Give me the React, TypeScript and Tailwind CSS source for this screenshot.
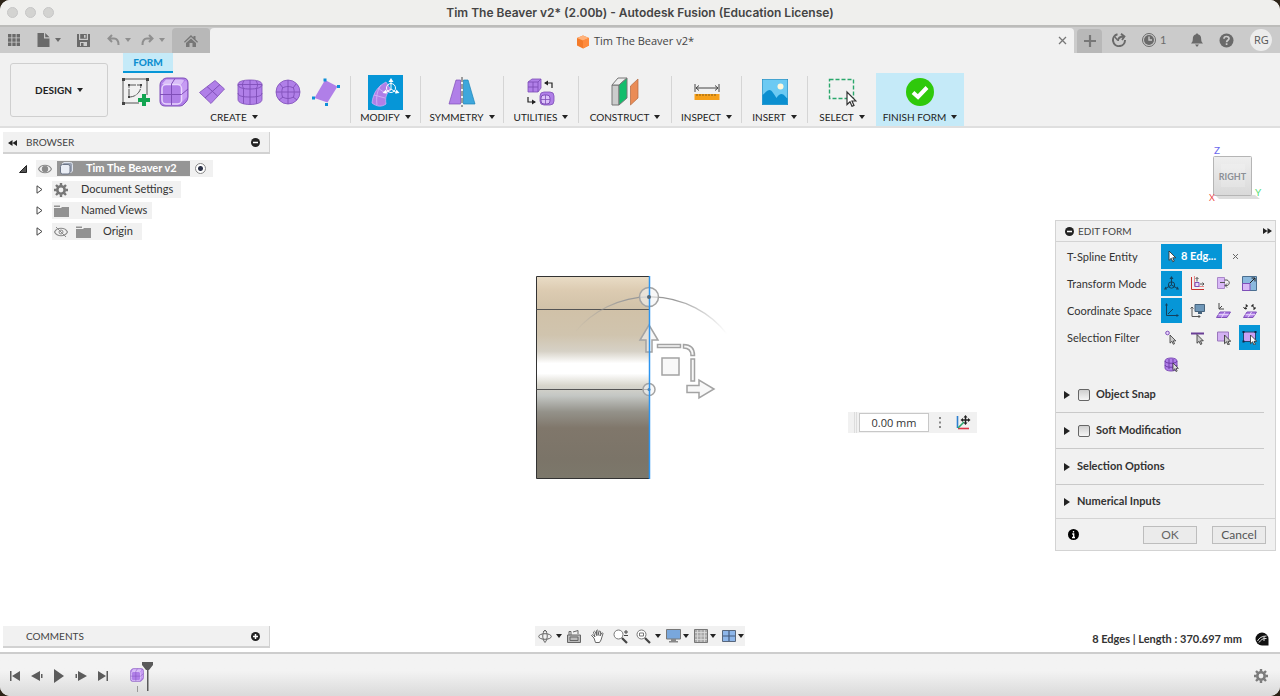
import React, { useState } from 'react';

const P = '#b07fe8';
const D = '#7f4fb8';

const Caret = ({ className = '' }: { className?: string }) => (
  <svg width="6" height="4" viewBox="0 0 6 4" className={className} aria-hidden>
    <path d="M0 0h6L3 4z" fill="currentColor" />
  </svg>
);

const Svg = ({ w, h = w, vb, children }: any) => (
  <svg width={w} height={h} viewBox={vb || `0 0 ${w} ${h}`} fill="none" className="shrink-0" aria-hidden>
    {children}
  </svg>
);

const Cursor = ({ x, y, s = 1, fill = '#fff' }: any) => (
  <path
    transform={`translate(${x} ${y}) scale(${s})`}
    d="M0 0v12.500l3-2.800 2 4.600 2-.9-2-4.400h4z"
    fill={fill}
    stroke="#333"
    strokeWidth="1.200"
  />
);

/* ---------- title bar and tabs ---------- */

const TitleBar = () => (
  <header className="relative flex h-[27px] items-center justify-center border-b-2 border-[#bcbcba] bg-[#efefed]">
    <div className="absolute left-[7px] top-[7px] flex gap-[7px]">
      <span className="size-[11px] rounded-full border border-[#c6c6c6] bg-[#d3d3d1]" />
      <span className="size-[11px] rounded-full border border-[#c6c6c6] bg-[#d3d3d1]" />
      <span className="size-[11px] rounded-full border border-[#c6c6c6] bg-[#d3d3d1]" />
    </div>
    <h1 className="font-[Inter,sans-serif] text-[12px] font-semibold text-[#444]">
      Tim The Beaver v2* (2.00b) - Autodesk Fusion (Education License)
    </h1>
  </header>
);

const TabStrip = () => (
  <nav className="flex h-[26px] items-end bg-[#cbcbcb] text-[#6a6a6a]">
    <div className="flex h-full w-[172px] shrink-0 items-center">
      <button aria-label="Data panel" className="ml-2 mr-[17px]">
        <Svg w={12}>
          <path d="M0 0h3.400v3.400H0zM4.300 0h3.400v3.400H4.300zM8.600 0H12v3.400H8.600zM0 4.300h3.400v3.400H0zM4.300 4.300h3.400v3.400H4.300zM8.600 4.300H12v3.400H8.600zM0 8.600h3.400V12H0zM4.300 8.600h3.400V12H4.300zM8.600 8.600H12V12H8.600z" fill="currentColor" />
        </Svg>
      </button>
      <button aria-label="File" className="flex items-center gap-[5px]">
        <Svg w={13} h={14}>
          <path d="M.500 0H7v5.500h5.500V14H.500zM8.200 0l4.300 4.300H8.200z" fill="currentColor" />
        </Svg>
        <Caret />
      </button>
      <button aria-label="Save" className="ml-4">
        <Svg w={13}>
          <path d="M0 0h2v6h9V0h2v13H0zM3.200 0h6.600v4.800H3.200zM7 1v2.800h1.600V1z" fill="currentColor" fillRule="evenodd" />
          <path d="M3 8h7v4H3z" fill="#cbcbcb" />
          <path d="M4 9h2.500v3H4z" fill="currentColor" />
        </Svg>
      </button>
      <button aria-label="Undo" className="ml-[17px] flex items-center gap-[5px] text-[#8f8f8f]">
        <Svg w={13} h={12}>
          <path d="M5 1L1.500 4.500 5 8M2 4.500h5c3 0 4.500 2.500 4.500 6.500" stroke="currentColor" strokeWidth="2" />
        </Svg>
        <Caret />
      </button>
      <button aria-label="Redo" className="ml-[10px] flex items-center gap-[5px] text-[#8f8f8f]">
        <Svg w={13} h={12}>
          <path d="M8 1l3.500 3.500L8 8M11 4.500H6C3 4.500 1.500 7 1.500 11" stroke="currentColor" strokeWidth="2" />
        </Svg>
        <Caret />
      </button>
    </div>
    <button aria-label="Home" className="flex h-[25px] w-[38px] shrink-0 items-center justify-center rounded-t bg-[#b8b8b8] text-[#777]">
      <Svg w={14} h={12}>
        <path d="M7 0l2.500 2.400V1h2v3.300L14 6.800l-.8.900L7 2 .8 7.700 0 6.800zM7 3.400l5 4.500V12H8.500V8h-3v4H2V7.900z" fill="currentColor" />
      </Svg>
    </button>
    <div className="flex h-[25px] flex-1 items-center rounded-t bg-[#f1f1f1]">
      <div className="flex flex-1 items-center justify-center gap-1 pl-[2px] pt-[2px] font-['Open_Sans',sans-serif] text-[11px] text-[#444]">
        <Svg w={14}>
          <path d="M7 .5l6 2.500v7.500L7 13.500 1 10.500V3z" fill="#f47b2a" />
          <path d="M7 .5l6 2.500-6 2.600L1 3z" fill="#ffb27a" />
          <path d="M7 5.600L13 3v7.500l-6 3z" fill="#ff8b3d" />
        </Svg>
        <span>Tim The Beaver v2*</span>
      </div>
      <button aria-label="Close tab" className="mr-[7px]">
        <Svg w={9}>
          <path d="M1 1l7 7M8 1L1 8" stroke="#777" strokeWidth="1.300" />
        </Svg>
      </button>
    </div>
    <div className="flex h-full w-[206px] shrink-0 items-center">
      <button aria-label="New tab" className="ml-[3px] mt-[2px] flex h-[24px] w-[25px] items-center justify-center rounded-t bg-[#b8b8b8]">
        <Svg w={12}>
          <path d="M6 0v12M0 6h12" stroke="#777" strokeWidth="2.200" />
        </Svg>
      </button>
      <button aria-label="Extensions" className="ml-[10px]">
        <Svg w={14}>
          <path d="M5.500 1.300A6 6 0 1 0 13 7" stroke="currentColor" strokeWidth="2" />
          <path d="M6 8c0-3 2-4.500 6-4.500M9 .700l3.500 2.800L10 7" stroke="currentColor" strokeWidth="1.800" />
          <path d="M2.500 3.500l3 3.500" stroke="currentColor" strokeWidth="1.500" />
        </Svg>
      </button>
      <button aria-label="Job status" className="ml-4 flex items-center gap-1 text-[11px]">
        <Svg w={14}>
          <circle cx="7" cy="7" r="6.500" stroke="currentColor" />
          <circle cx="7" cy="7" r="5" fill="currentColor" />
          <path d="M7 3.500V7h3" stroke="#cbcbcb" strokeWidth="1.400" />
        </Svg>
        1
      </button>
      <button aria-label="Notifications" className="ml-[25px]">
        <Svg w={12} h={14}>
          <path d="M6 0l1 1.300c2.500.6 3.200 2.500 3.200 5 0 2 .6 3 1.800 4.200H0C1.200 9.300 1.800 8.300 1.800 6.300c0-2.500.7-4.400 3.200-5zM4 11.500h4L6 14z" fill="currentColor" />
        </Svg>
      </button>
      <button aria-label="Help" className="ml-4">
        <Svg w={15}>
          <circle cx="7.500" cy="7.500" r="7" fill="currentColor" />
          <path d="M5 5.800c0-3 5-3 5-.2 0 1.700-2.400 1.700-2.400 3.600M7.600 10.300v1.800" stroke="#cbcbcb" strokeWidth="1.700" />
        </Svg>
      </button>
      <button className="ml-4 flex size-[22px] items-center justify-center rounded-full bg-[#ececec] font-['Open_Sans',sans-serif] text-[11px] text-[#555]">RG</button>
    </div>
  </nav>
);

/* ---------- ribbon icons ---------- */

const SketchIcon = () => (
  <Svg w={30}>
    <path d="M2 2h24v16M2 2v24h16" stroke="#555" />
    <path d="M8 8h12c0 7-5 12-12 12z" stroke="#555" strokeDasharray="7 1" />
    <path d="M1 1h3v3H1zM25 1h3v3h-3zM1 25h3v3H1zM7 7h2v2H7zM19 7h2v2h-2zM7 19h2v2H7z" fill="#444" />
    <path d="M21 17h4v4h4v4h-4v4h-4v-4h-4v-4h4z" fill="#12a551" />
  </Svg>
);

const BoxIcon = ({ w = 30 }: { w?: number }) => (
  <Svg w={w} vb="0 0 30 30">
    <path d="M8 1h16q5 0 5 5v14q0 3-2 5l-2 2q-1.500 2-4 2H6q-5 0-5-5V8q0-2.500 1.500-4L4 2.500Q5.500 1 8 1z" fill={P} stroke={D} />
    <path d="M3 7l4-4.500h15q4 0 2.500 2L22 8H7z" fill="#d9bdf8" />
    <path d="M22 8l4.500-4.500Q28 4 28 6v14l-5 5z" fill="#c79cf4" />
    <rect x="3" y="7.500" width="19.500" height="19.500" rx="4" fill={P} stroke="#e8d6fc" strokeWidth="1.500" />
    <path d="M16 1.500L12.500 7v21M1 17.500h21.500L29 12" stroke={D} />
  </Svg>
);

const PlaneIcon = () => (
  <Svg w={26} h={24}>
    <path d="M16 .500L25.500 9 12 23.500.500 12.500z" fill={P} stroke={D} strokeWidth=".8" />
    <path d="M8 6.500L18.500 16M21 4.500L6 18" stroke={D} />
  </Svg>
);

const CylinderIcon = () => (
  <Svg w={26}>
    <path d="M1 5.500C1 2 7 1 13 1s12 1 12 4.500v15c0 3.500-6 5-12 5s-12-1.500-12-5z" fill={P} stroke={D} strokeWidth=".8" />
    <path d="M1 5.500C1 9 7 10 13 10s12-1 12-4.500M1 14c0 3.500 6 4 12 4s12-.5 12-4M13 1v24.500M7 1.800c-2 3-2 5-.5 7.500v15.500M19 1.800c2 3 2 5 .5 7.500v15.500M1 5.500h24" stroke={D} strokeWidth=".9" />
  </Svg>
);

const SphereIcon = () => (
  <Svg w={26}>
    <circle cx="13" cy="13" r="12" fill={P} stroke={D} strokeWidth=".8" />
    <path d="M13 1v6M13 19v6M1 13h5M20 13h5M5 5l3 4M21 5l-3 4M4 21l4-3M22 21l-4-3M7.500 9C11 7 15 7 18.500 9c1 3 1 6 0 9-3.500 2-7.500 2-11 0-1-3-1-6 0-9zM13 7v12M6.500 13h13" stroke={D} strokeWidth=".9" />
  </Svg>
);

const FaceIcon = () => (
  <Svg w={28} h={28}>
    <path d="M13 2l12.500 6.500-10 16L2.500 20z" fill={P} />
    <path d="M11.500.500h3v3h-3zM25 7h3v3h-3zM0 18.500h3v3H0zM13 25h3v3h-3z" fill="#0d8fd8" />
  </Svg>
);

const ModifyIcon = () => (
  <Svg w={35}>
    <path d="M35 0H0v35h35z" fill="#0696d7" />
    <path d="M4 28C5 18 10 11 18 7l5 8c-5 3-6 8-5 14-4 3-9 3-14-1z" fill={P} stroke="#d6b6f8" strokeWidth=".7" />
    <path d="M10 13l7 5M6 20l11 3M13 10c-4 6-5 12-4 20" stroke="#d6b6f8" strokeWidth=".8" />
    <path d="M23 14V6M23 14l-6 4M23 14l6 4" stroke="#fff" />
    <circle cx="23" cy="13" r="4.500" stroke="#fff" />
    <path d="M23 3l2.500 4h-5zM14.500 18l3.500-3.500 1 4zM31.500 18l-4.500.500 1.500-4z" fill="#fff" />
  </Svg>
);

const SymmetryIcon = () => (
  <Svg w={28} h={30}>
    <path d="M8 3h4.500v24H1z" fill={P} stroke={D} strokeWidth=".7" />
    <path d="M15.500 3H20l7 24H15.500z" fill="#3ea7dc" stroke="#1d84b8" strokeWidth=".7" />
    <path d="M14 0v30" stroke="#444" strokeDasharray="5 2" />
  </Svg>
);

const UtilitiesIcon = () => (
  <Svg w={28}>
    <path d="M1 4l4-3h9v9l-3 4H1z" fill={P} stroke={D} strokeWidth=".8" />
    <path d="M1 4h10v10M11 4l3-3M6 4v10M1 9h10" stroke={D} strokeWidth=".9" />
    <rect x="13" y="14" width="14" height="13" rx="4" fill={P} stroke={D} strokeWidth=".8" />
    <rect x="14" y="17" width="9" height="9" rx="3" fill="#dcc2fa" stroke={D} />
    <path d="M18.500 17v9M14 21.500h9" stroke={D} strokeWidth=".8" />
    <path d="M18 5h7v5M1 19v5h7" stroke="#222" strokeWidth="1.200" />
    <path d="M17 5l4-2.500v5zM9 24l-4-2.500v5z" fill="#222" />
  </Svg>
);

const ConstructIcon = () => (
  <Svg w={28} h={30}>
    <path d="M1 8h7v20H1z" fill="#ccc" stroke="#777" />
    <path d="M1 8l6-7h9L8 8z" fill="#eee" stroke="#777" />
    <path d="M8 8l8-7v20l-8 7z" fill="#13bd6c" stroke="#777" />
    <path d="M19.500 9L27 2v19l-7.500 7z" fill="#ea8c56" stroke="#b2693f" strokeWidth=".7" />
  </Svg>
);

const InspectIcon = () => (
  <Svg w={26} h={18}>
    <path d="M1 1v8M25 1v8M2 5h22M5 2.500L2 5l3 2.500M21 2.500L24 5l-3 2.500" stroke="#444" />
    <path d="M.500 11h25v6H.500z" fill="#f6a01a" />
    <path d="M3 11v2M6 11v2M9 11v2M12 11v2M15 11v2M18 11v2M21 11v2" stroke="#8a5d10" />
  </Svg>
);

const InsertIcon = () => (
  <Svg w={26}>
    <path d="M0 0h26v26H0z" fill="#6ccaf3" stroke="#1e7eb0" />
    <path d="M.500 16C3 14 5 11 7.500 11s5 5 7 8c2-3 3-4 5-4 2.500 0 4 3 6 4.500v6H.500z" fill="#0b8fd0" />
    <circle cx="18.500" cy="7.500" r="3" fill="#fff8dc" />
  </Svg>
);

const SelectIcon = () => (
  <Svg w={30}>
    <path d="M2.500 2.500h24v19h-24z" stroke="#2aa86c" strokeWidth="1.400" strokeDasharray="4 2" />
    <Cursor x={20} y={15} />
  </Svg>
);

const FinishIcon = () => (
  <Svg w={28}>
    <circle cx="14" cy="14" r="14" fill="#2fc90b" />
    <path d="M7 14.500l5 4.500 9-9.500" stroke="#fff" strokeWidth="4" />
  </Svg>
);

const ToolGroup = ({ label, icon, className = '' }: any) => (
  <div className={`flex shrink-0 ${className}`}>
    <button className="flex flex-1 flex-col items-center pt-[3px]">
      <span className="flex h-[32px] shrink-0 items-center">{icon}</span>
      <span className="flex h-[18px] items-center gap-[5px] whitespace-nowrap text-[10px] text-[#222]">
        {label}
        <Caret />
      </span>
    </button>
    <span className="mt-[3px] h-[47px] w-px bg-[#d5d5d5]" />
  </div>
);

const Ribbon = () => (
  <section className="flex border-b-2 border-[#dfdfdf] bg-[#f1f1f1]">
    <div className="pl-[10px] pt-[10px]">
      <button className="flex h-[54px] w-[98px] items-center justify-center gap-[5px] rounded-[3px] border border-[#cfcfcf] text-[10px] font-bold text-[#222]">
        DESIGN
        <Caret />
      </button>
    </div>
    <div className="flex-1 pl-[10px]">
      <button className="ml-[5px] block h-[20px] w-[50px] border-b-2 border-[#0696d7] bg-[#c5eaf8] text-[10px] font-black text-[#0d8fd0]">
        FORM
      </button>
      <div className="flex h-[53px]">
        <div className="flex w-[233px] shrink-0">
          <div className="flex flex-1 flex-col items-center pt-[3px]">
            <div className="flex h-[32px] shrink-0 items-center gap-[11px] self-start pl-[3px]">
              <button aria-label="Create sketch"><SketchIcon /></button>
              <button aria-label="Box" className="-ml-[3px]"><BoxIcon /></button>
              <button aria-label="Plane" className="-ml-px"><PlaneIcon /></button>
              <button aria-label="Cylinder" className="ml-px"><CylinderIcon /></button>
              <button aria-label="Sphere" className="ml-px"><SphereIcon /></button>
              <button aria-label="Face"><FaceIcon /></button>
            </div>
            <button className="flex h-[18px] items-center gap-[5px] text-[10px] text-[#222]">
              CREATE
              <Caret />
            </button>
          </div>
          <span className="mt-[3px] h-[47px] w-px bg-[#d5d5d5]" />
        </div>
        <ToolGroup className="w-[70px]" label="MODIFY" icon={<ModifyIcon />} />
        <ToolGroup className="w-[83px]" label="SYMMETRY" icon={<SymmetryIcon />} />
        <ToolGroup className="w-[75px]" label="UTILITIES" icon={<UtilitiesIcon />} />
        <ToolGroup className="w-[93px]" label="CONSTRUCT" icon={<ConstructIcon />} />
        <ToolGroup className="w-[70px]" label="INSPECT" icon={<InspectIcon />} />
        <ToolGroup className="w-[66px]" label="INSERT" icon={<InsertIcon />} />
        <button className="flex w-[68px] shrink-0 flex-col items-center pt-[3px]">
          <span className="flex h-[32px] shrink-0 items-center"><SelectIcon /></span>
          <span className="flex h-[18px] items-center gap-[5px] text-[10px] text-[#222]">
            SELECT
            <Caret />
          </span>
        </button>
        <button className="flex w-[88px] shrink-0 flex-col items-center bg-[#c5eaf8] pt-[3px]">
          <span className="flex h-[32px] shrink-0 items-center"><FinishIcon /></span>
          <span className="flex h-[18px] items-center gap-[5px] whitespace-nowrap text-[10px] text-[#222]">
            FINISH FORM
            <Caret />
          </span>
        </button>
      </div>
    </div>
  </section>
);

/* ---------- browser tree ---------- */

const ToggleDot = ({ plus = false }: { plus?: boolean }) => (
  <Svg w={9}>
    <circle cx="4.500" cy="4.500" r="4.500" fill="#222" />
    <path d={plus ? 'M2 4.500h5M4.500 2v5' : 'M2 4.500h5'} stroke="#fff" strokeWidth="1.500" />
  </Svg>
);

const Gear = ({ color = '#777' }: { color?: string }) => (
  <Svg w={14}>
    <circle cx="7" cy="7" r="3.700" stroke={color} strokeWidth="2.600" />
    <path d="M7 0v2.500M7 11.500V14M0 7h2.500M11.500 7H14M2 2l1.800 1.800M10.200 10.200L12 12M12 2l-1.800 1.800M3.800 10.200L2 12" stroke={color} strokeWidth="2.400" />
  </Svg>
);

const Folder = () => (
  <Svg w={15} h={12}>
    <path d="M0 3h7l1-1h7v10H0zM0 .500h6v1.500H0z" fill="#929292" />
  </Svg>
);

const Eye = ({ off = false }: { off?: boolean }) => (
  <Svg w={14} h={12}>
    <path d="M.500 6C3 1 11 1 13.500 6 11 11 3 11 .500 6z" stroke="#8a8a8a" strokeWidth="1.200" />
    <circle cx="7" cy="6" r={off ? 2 : 2.800} fill={off ? 'none' : '#8a8a8a'} stroke="#8a8a8a" />
    {off && <path d="M2 1l10 10" stroke="#8a8a8a" />}
  </Svg>
);

const TreeItem = ({ label, className, children }: any) => (
  <li className="flex h-[21px] items-center pl-[33px]">
    <button aria-label={`Expand ${label}`} className="w-4">
      <Svg w={7} h={9}>
        <path d="M1 .800L6 4.500 1 8.200z" stroke="#444" />
      </Svg>
    </button>
    <span className={`flex h-[17px] items-center bg-[#f1f1f1] pl-[2px] ${className}`}>
      {children}
      <span>{label}</span>
    </span>
  </li>
);

const Browser = () => (
  <aside className="w-[267px] text-[11px] text-[#333]">
    <div className="flex h-[22px] items-center border-b-2 border-r border-[#d2d2d2] bg-[#f1f1f1] pl-[5px] pr-[9px] pt-px">
      <button aria-label="Collapse browser">
        <Svg w={9} h={6}>
          <path d="M4.500 0v6L0 3zM9 0v6L4.500 3z" fill="#222" />
        </Svg>
      </button>
      <h2 className="ml-[9px] flex-1 text-[10px] text-[#444]">BROWSER</h2>
      <button aria-label="Minimize browser"><ToggleDot /></button>
    </div>
    <ul className="mt-1">
      <li className="flex h-[21px] items-center pl-4">
        <button aria-label="Collapse root" className="w-[17px]">
          <Svg w={8}>
            <path d="M7.500.500v7h-7z" fill="#555" stroke="#222" />
          </Svg>
        </button>
        <div className="flex h-[17px] w-[177px] items-center gap-[5px] bg-[#f1f1f1] pl-[2px]">
          <Eye />
          <div className="flex h-[15px] w-[133px] items-center bg-[#959595] pl-[3px] font-bold text-white">
            <Svg w={13}>
              <path d="M1 4l3-3h8v8l-3 3H1z" fill="#9aa3b4" />
              <rect x=".5" y="2.500" width="9.500" height="9.500" rx="2" fill="#e9edf5" stroke="#6c7587" />
              <path d="M2 2l2-1.500h6.500q2 0 2 2V9L10.500 11" stroke="#dfe4ee" />
            </Svg>
            <span className="ml-[13px]">Tim The Beaver v2</span>
          </div>
          <input type="radio" name="active" aria-label="Activate Tim The Beaver v2" defaultChecked className="size-[11px] appearance-none rounded-full border border-[#888] bg-[radial-gradient(circle,#2b3147_0_2px,#fff_3px)]" />
        </div>
      </li>
      <TreeItem label="Document Settings" className="w-[129px] gap-[13px]"><Gear /></TreeItem>
      <TreeItem label="Named Views" className="w-[100px] gap-[12px]"><Folder /></TreeItem>
      <TreeItem label="Origin" className="w-[90px] gap-[12px]">
        <span className="flex gap-2"><Eye off /><Folder /></span>
      </TreeItem>
    </ul>
  </aside>
);

/* ---------- edit form dialog ---------- */

const A = '#c9302c';

const icons: Record<string, React.ReactNode> = {
  free: (
    <>
      <circle cx="7.500" cy="9" r="3.200" stroke="#14405c" />
      <path d="M7.500 9V2M7.500 9l-6 3.500M7.500 9l6 3.500" stroke="#14405c" />
      <path d="M7.500 0l2 3h-4zM0 13.500l1.500-3 1.500 3zM15 13.500l-1.500-3-1.500 3z" fill="#14405c" />
    </>
  ),
  translate: (
    <>
      <path d="M1.500 1v12.500H14" stroke={A} />
      <path d="M4.500 0v10.500H14" stroke="#e58a8a" />
      <path d="M5 6.500h4v4H5z" fill="#e9dcf8" stroke={D} />
      <path d="M7 5.500V1.500M5.500 3L7 1.500 8.500 3M10 8h4M12.500 6.500L14 8l-1.500 1.500" stroke="#555" />
    </>
  ),
  rotate: (
    <>
      <path d="M1.500 1.500h7v11h-7z" fill="#d9b9f7" stroke="#a987c9" />
      <path d="M4 6.500h5M8.500 4H11c3 1 3 5 0 5.500H9M11 7.500l-2 2 2 2" stroke="#555" />
    </>
  ),
  scale: (
    <>
      <path d="M.500.500h14v14H.500z" fill="#8bb9de" stroke="#4b6f90" />
      <path d="M.500 7.500H8v7H.500z" fill="#d9b9f7" stroke={D} />
      <path d="M8 7l5-5M9.500 2H13v3.500" stroke="#222" />
    </>
  ),
  world: (
    <>
      <path d="M2.500 1v11.500H14M4 11L9 6" stroke="#14405c" />
      <path d="M2.500 0l1.500 2.500H1zM15 12.500l-2.500 1.500v-3z" fill="#14405c" />
    </>
  ),
  view: (
    <>
      <path d="M5 1.500h9.500v7H5z" fill="#6f97b8" stroke="#47637c" />
      <path d="M8 9h4v2H8z" fill="#47637c" />
      <path d="M2 4v9.500h8M.500 5.500L2 4l1.500 1.500M8.500 12l1.500 1.500L8.500 15" stroke="#555" />
    </>
  ),
  local: (
    <>
      <path d="M4 9h10.500l-3.500 5.500H.500z" fill={P} stroke={D} />
      <path d="M2.500 11.700h10M9 9l-3.500 5.500" stroke="#ecdcfc" />
      <path d="M3 0v6h5M3 6l3-3" stroke="#444" />
    </>
  ),
  each: (
    <>
      <path d="M5 9h9.500l-3.500 5.500H1.500z" fill={P} stroke={D} />
      <path d="M3.500 11.700h9.500M9.500 9L6 14.500" stroke="#ecdcfc" />
      <path d="M3 6l2-4M3.500 2H5v2M1.500 4L3 6l2-.5M10 2l3 4M10 4V2h2M11 6h2V4" stroke="#222" />
    </>
  ),
  vertex: (
    <>
      <circle cx="3.500" cy="3" r="1.800" fill="#e7d4fb" stroke={D} />
      <Cursor x={6} y={5} s={0.65} fill="#ccc" />
    </>
  ),
  edge: (
    <>
      <path d="M1 3.500h13" stroke="#6a3f96" strokeWidth="2" />
      <Cursor x={7} y={4.500} s={0.7} fill="#ccc" />
    </>
  ),
  face: (
    <>
      <path d="M1.500 2h11v9h-11z" fill="#d3b1f3" stroke="#9a76bd" />
      <Cursor x={8.500} y={5} s={0.7} fill="#ccc" />
    </>
  ),
  all: (
    <>
      <path d="M1.500 2h12v9.500h-12z" fill="#c9a0f5" stroke="#24466b" />
      <path d="M.500 1h2v2h-2zM12.500 1h2v2h-2zM.500 10.500h2v2h-2z" fill="#124" />
      <Cursor x={8.500} y={5} s={0.7} />
    </>
  ),
  body: (
    <>
      <path d="M1 4c0-4 12-4 12 0v7c0 4-12 4-12 0z" fill={P} stroke={D} />
      <path d="M1 4c0 3 12 3 12 0M1 8c0 3 12 3 12 0M5 2v10M9 2v10" stroke="#6f3da8" />
      <Cursor x={9} y={6} s={0.6} fill="#ddd" />
    </>
  ),
};

const IconPicker = ({ name, options, initial }: { name: string; options: string[]; initial: string }) => {
  const [value, setValue] = useState(initial);
  return (
    <div role="group" aria-label={name} className="flex w-[104px] flex-wrap gap-x-[5px] gap-y-[2px]">
      {options.map((o) => (
        <button
          key={o}
          aria-label={o}
          aria-pressed={o === value}
          onClick={() => setValue(o)}
          className={`flex h-[25px] w-[21px] items-center justify-center ${o === value ? 'bg-[#0696d7]' : ''}`}
        >
          <Svg w={15}>{icons[o]}</Svg>
        </button>
      ))}
    </div>
  );
};

const Section = ({ label, check = false, last = false }: { label: string; check?: boolean; last?: boolean }) => (
  <div className={last ? 'flex h-[33px] items-center pl-2' : 'mr-[11px] flex h-[36px] items-center border-b border-[#c9c9c9] pl-2'}>
    <button aria-label={`Expand ${label}`}>
      <Svg w={6} h={8}>
        <path d="M0 0l6 4-6 4z" fill="#222" />
      </Svg>
    </button>
    {check ? (
      <label className="ml-2 flex items-center gap-[6px] font-bold">
        <input type="checkbox" className="size-[12px] appearance-none rounded-[2px] border border-[#666] bg-linear-to-b from-[#cfcfcf] to-[#f6f6f6] checked:bg-[#0696d7]" />
        {label}
      </label>
    ) : (
      <span className="ml-[7px] font-bold">{label}</span>
    )}
  </div>
);

const EditForm = () => (
  <section className="w-[221px] border border-[#d3d3d3] bg-[#f1f1f1] text-[11px] text-[#333]">
    <div className="flex h-[21px] items-center gap-1 border-b border-[#d3d3d3] pl-[9px] pr-[3px] text-[#444]">
      <button aria-label="Minimize dialog"><ToggleDot /></button>
      <h2 className="flex-1 text-[10px]">EDIT FORM</h2>
      <button aria-label="Dock dialog">
        <Svg w={9} h={6}>
          <path d="M0 0l4.500 3L0 6zM4.500 0L9 3 4.500 6z" fill="#222" />
        </Svg>
      </button>
    </div>
    <div className="grid grid-cols-[94px_1fr] gap-y-[2px] whitespace-nowrap pl-[11px] pt-[2px]">
      <span className="leading-[25px]">T-Spline Entity</span>
      <div className="flex items-center">
        <button className="flex h-[25px] w-[61px] items-center gap-[5px] bg-[#0696d7] pl-[7px] font-bold text-white">
          <Svg w={8} h={13}>
            <Cursor x={1} y={1} s={0.75} />
          </Svg>
          8 Edg...
        </button>
        <button aria-label="Clear selection" className="ml-[10px]">
          <Svg w={7}>
            <path d="M1 1l5 5M6 1L1 6" stroke="#666" />
          </Svg>
        </button>
      </div>
      <span className="leading-[25px]">Transform Mode</span>
      <IconPicker name="Transform Mode" options={['free', 'translate', 'rotate', 'scale']} initial="free" />
      <span className="leading-[25px]">Coordinate Space</span>
      <IconPicker name="Coordinate Space" options={['world', 'view', 'local', 'each']} initial="world" />
      <span className="leading-[25px]">Selection Filter</span>
      <IconPicker name="Selection Filter" options={['vertex', 'edge', 'face', 'all', 'body']} initial="all" />
    </div>
    <Section label="Object Snap" check />
    <Section label="Soft Modification" check />
    <Section label="Selection Options" />
    <Section label="Numerical Inputs" last />
    <div className="flex h-[32px] items-center border-t border-[#d3d3d3] pl-3 pr-[9px]">
      <span className="flex-1">
        <Svg w={11}>
          <circle cx="5.500" cy="5.500" r="5.500" fill="#000" />
          <path d="M5.500 2v1.500M4.200 5h1.500v3.500M4 8.500h3" stroke="#fff" strokeWidth="1.300" />
        </Svg>
      </span>
      <button className="h-[18px] w-[54px] border border-[#bdbdbd] bg-[#ebebeb] text-[12px] leading-[16px] text-[#666]">OK</button>
      <button className="ml-[15px] h-[18px] w-[54px] border border-[#bdbdbd] bg-[#ebebeb] text-[12px] leading-[16px] text-[#555]">Cancel</button>
    </div>
  </section>
);

/* ---------- canvas content ---------- */

const ViewCube = () => (
  <svg width="60" height="60" viewBox="0 0 60 60" aria-label="View cube">
    <defs>
      <linearGradient id="cube" x1="0" y1="0" x2="0" y2="1">
        <stop offset="0" stopColor="#efefef" />
        <stop offset="1" stopColor="#d9d9d9" />
      </linearGradient>
    </defs>
    <path d="M9 51h40l5 4H13z" fill="#cfcfcf" opacity=".7" />
    <rect x="7.500" y="12.500" width="38" height="39" rx="1" fill="url(#cube)" stroke="#b5b5b5" />
    <rect x="15" y="20" width="24" height="23" fill="#fff" opacity=".18" />
    <text x="26.500" y="36" textAnchor="middle" fontSize="9" fontWeight="700" fill="#8c9096">RIGHT</text>
    <text x="8" y="10" fontSize="10" fill="#6a6aee">Z</text>
    <text x="3" y="57" fontSize="9" fill="#ee4b4b">X</text>
    <text x="49" y="52" fontSize="10" fill="#58dd77">Y</text>
  </svg>
);

const Model = () => (
  <svg width="200" height="215" viewBox="0 0 200 215" fill="none" className="absolute left-1/2 top-[142px] -ml-[110px]" aria-label="Model">
    <defs>
      <linearGradient id="body" x1="0" y1="0" x2="0" y2="1">
        <stop offset="0" stopColor="#e9dcc6" />
        <stop offset=".07" stopColor="#dccbb1" />
        <stop offset=".17" stopColor="#d0c1a8" />
        <stop offset=".29" stopColor="#d0c4ae" />
        <stop offset=".37" stopColor="#d6d1c6" />
        <stop offset=".43" stopColor="#ffffff" />
        <stop offset=".48" stopColor="#ffffff" />
        <stop offset=".54" stopColor="#d8d6cc" />
        <stop offset=".59" stopColor="#c4c7c4" />
        <stop offset=".67" stopColor="#94928a" />
        <stop offset=".75" stopColor="#80776b" />
        <stop offset=".9" stopColor="#7b7468" />
        <stop offset="1" stopColor="#7c786b" />
      </linearGradient>
      <linearGradient id="arc" x1="45" y1="0" x2="197" y2="0" gradientUnits="userSpaceOnUse">
        <stop offset="0" stopColor="#999" stopOpacity="0" />
        <stop offset=".35" stopColor="#999" />
        <stop offset=".65" stopColor="#999" />
        <stop offset="1" stopColor="#999" stopOpacity="0" />
      </linearGradient>
    </defs>
    <rect x="6.500" y="6.500" width="113" height="202" fill="url(#body)" />
    <path d="M119 6.500H6.500v202H119" stroke="#333" />
    <path d="M6.500 39.500h113M6.500 119.500h113" stroke="#555" />
    <path d="M45 62A98 98 0 0 1 197 64" stroke="url(#arc)" strokeWidth="1.300" />
    <g stroke="#a3a3a3" strokeWidth="1.500" fill="#f4f4f4" fillOpacity=".6">
      <circle cx="119" cy="27" r="9.500" />
      <path d="M119 55l9 15h-6v12h-6V70h-6z" />
      <path d="M127.500 74.500h23v3h-23z" />
      <path d="M153.500 74.500c7 0 11 4 11 11h-3.500c0-5-3-7.500-7.500-7.500z" />
      <path d="M161 89h3.500v22H161z" />
      <path d="M132 88h17v17h-17z" />
      <path d="M157 115.500h12V110l15 9-15 9v-5.500h-12z" />
      <circle cx="119" cy="119.500" r="6" />
    </g>
    <path d="M119.500 6v203" stroke="#2d95f0" strokeWidth="1.500" />
    <circle cx="119" cy="27" r="2" fill="#56697a" />
    <circle cx="119" cy="119.500" r="1.500" fill="#4a86b8" />
  </svg>
);

const DistanceInput = () => (
  <div className="absolute left-[calc(50%+208px)] top-[284px] flex h-[21px] w-[129px] items-center bg-[#f1f1f1] text-[11px]">
    <span className="ml-[6px] mr-[2px] h-full w-[3px] border-x border-[#ddd]" />
    <input aria-label="Distance" defaultValue="0.00 mm" className="h-[19px] w-[70px] border border-[#c8c8c8] bg-white text-center font-['Open_Sans',sans-serif] text-[#333] outline-none" />
    <button aria-label="More" className="ml-[9px]">
      <Svg w={4} h={13}>
        <path d="M1 1h2v2H1zM1 5.500h2v2H1zM1 10h2v2H1z" fill="#888" />
      </Svg>
    </button>
    <button aria-label="Set pivot" className="ml-[13px]">
      <Svg w={16}>
        <path d="M2.500 1v12" stroke="#2d7fd0" strokeWidth="1.600" />
        <path d="M3 13.500h11" stroke="#d34" strokeWidth="1.600" />
        <path d="M3 13l6-6" stroke="#2aa86c" strokeWidth="1.600" />
        <path d="M10.500 2v6M7.500 5h6" stroke="#222" strokeWidth="1.400" />
        <path d="M10.500 0l2 2.500h-4zM10.500 10l2-2.500h-4zM5.500 5L8 3v4zM15.500 5L13 3v4z" fill="#222" />
      </Svg>
    </button>
  </div>
);

const NavBar = () => (
  <div className="flex h-[20px] w-[210px] items-center self-start bg-[#f1f1f1] pl-[3px] text-[#222]">
    <button aria-label="Orbit" className="flex items-center gap-1">
      <Svg w={14}>
        <ellipse cx="7" cy="7.500" rx="6.300" ry="2.800" stroke="#666" />
        <path d="M7 1C4 4 4 10 7 13.500c3-3.500 3-9.500 0-12.500M5 3l2-2 2 2" stroke="#666" />
      </Svg>
      <Caret />
    </button>
    <button aria-label="Look at" className="ml-[5px]">
      <Svg w={14}>
        <path d="M.500 6h13v7.500H.500z" fill="#bbb" stroke="#666" />
        <path d="M3 8h8v3.500H3zM2 6V2.500h2V6M6 3l5-1.500V5" stroke="#666" />
      </Svg>
    </button>
    <button aria-label="Pan" className="ml-[9px]">
      <Svg w={14}>
        <path d="M4 9L1.500 6.500q1-1.500 2 0L5 8 3.500 3q1-1.500 2 0l1 3.500V1.500q1-1 1.500 0v5l1-4q1-1 1.600 0L10 7l1.700-3q1.200-.5 1.300.5L11 11l-1.500 2.500h-4z" fill="#fff" stroke="#666" />
      </Svg>
    </button>
    <button aria-label="Zoom" className="ml-[9px]">
      <Svg w={15}>
        <circle cx="5.500" cy="5.500" r="4.500" fill="#fff" stroke="#777" />
        <path d="M9 9l5 5" stroke="#444" strokeWidth="2.200" />
        <path d="M13 1v4M11 3h4M11 6.500h4" stroke="#444" />
      </Svg>
    </button>
    <button aria-label="Zoom window" className="ml-[8px] flex items-center gap-[4px]">
      <Svg w={15}>
        <circle cx="5.500" cy="5.500" r="4.500" fill="#fff" stroke="#777" />
        <path d="M3.500 4h4v3h-4z" stroke="#777" />
        <path d="M9 9l5 5" stroke="#444" strokeWidth="2.200" />
      </Svg>
      <Caret />
    </button>
    <button aria-label="Display settings" className="ml-[5px] flex items-center gap-[2px]">
      <Svg w={15} h={14}>
        <path d="M.500.500h14v9.500H.500z" fill="#79a7dc" stroke="#777" />
        <path d="M5 10h5v2h2v1.500H3V12h2z" fill="#888" />
      </Svg>
      <Caret />
    </button>
    <button aria-label="Grid and snaps" className="ml-[5px] flex items-center gap-[2px]">
      <Svg w={14}>
        <path d="M.500.500h13v13H.500z" fill="#aaa" stroke="#777" />
        <path d="M3.500 1v12M7 1v12M10.500 1v12M1 3.500h12M1 7h12M1 10.500h12" stroke="#ddd" strokeWidth=".8" />
      </Svg>
      <Caret />
    </button>
    <button aria-label="Viewports" className="ml-[6px] flex items-center gap-[2px]">
      <Svg w={14} h={13}>
        <path d="M.500.500h13v11H.500z" fill="#8db6ea" stroke="#58677c" />
        <path d="M7 1v10M1 6h12" stroke="#445a7c" strokeWidth="1.200" />
      </Svg>
      <Caret />
    </button>
  </div>
);

const Canvas = () => (
  <main className="relative flex flex-1 flex-col justify-between bg-white px-[3px] pb-1 pt-1">
    <Model />
    <DistanceInput />
    <div className="flex justify-between">
      <Browser />
      <div className="mt-3 flex flex-col items-end pr-px">
        <div className="mb-4 mr-[10px]">
          <ViewCube />
        </div>
        <EditForm />
      </div>
    </div>
    <div className="grid grid-cols-[1fr_auto_1fr] items-center">
      <div className="flex h-[22px] w-[267px] items-center border-b-2 border-r border-[#d2d2d2] bg-[#f1f1f1] pl-[23px] pr-[9px] text-[10px] text-[#444]">
        <h2 className="flex-1">COMMENTS</h2>
        <button aria-label="Expand comments"><ToggleDot plus /></button>
      </div>
      <NavBar />
      <div className="flex items-center justify-end gap-[13px] pr-2 pt-1 text-[11px] font-bold text-[#333]">
        <span>8 Edges | Length : 370.697 mm</span>
        <Svg w={14}>
          <path d="M7 .500A6.500 6.500 0 1 0 7 13.500h6.500V7A6.500 6.500 0 0 0 7 .500z" fill="#111" />
          <path d="M2.500 9C4 6 7 4 11.500 4M4 10.500C6 8 7.500 6 11.500 6.500M9 4v5" stroke="#ddd" />
        </Svg>
      </div>
    </div>
  </main>
);

const Timeline = () => (
  <footer className="flex h-[44px] items-center border-t-2 border-[#cdcdcd] bg-linear-to-b from-[#f3f3f3] from-40% to-[#dadada] pl-[9px] pr-[12px] pt-[2px] text-[#5c5c5c]">
    <div className="flex items-center gap-[10px]">
      <button aria-label="Go to start"><Svg w={12}><path d="M1 1h1.500v10H1zM11 1v10L3 6z" fill="currentColor" /></Svg></button>
      <button aria-label="Step back"><Svg w={12}><path d="M9 1v10L0 6zM10 4h1.500v4H10z" fill="currentColor" /></Svg></button>
      <button aria-label="Play"><Svg w={12} h={14}><path d="M1 0l10 7-10 7z" fill="currentColor" /></Svg></button>
      <button aria-label="Step forward"><Svg w={12}><path d="M3 1v10l9-5zM.500 4H2v4H.500z" fill="currentColor" /></Svg></button>
      <button aria-label="Go to end"><Svg w={12}><path d="M1 1v10l8-5zM9.500 1H11v10H9.500z" fill="currentColor" /></Svg></button>
    </div>
    <button aria-label="Form feature" className="ml-[21px] flex flex-col items-center pt-[8px]">
      <BoxIcon w={14} />
      <span className="mt-1 h-[6px] w-px bg-[#999]" />
    </button>
    <span className="-ml-[2px]">
      <Svg w={12} h={29}>
        <path d="M0 0h11v3L7 8H4L0 3zM5 8h1.500v21H5z" fill="#5a5a5a" />
      </Svg>
    </span>
    <button aria-label="Timeline settings" className="ml-auto"><Gear color="#7c7c7c" /></button>
  </footer>
);

export default function App() {
  return (
    <div className="bg-[#2d2418]">
      <div className="flex min-h-screen flex-col overflow-hidden rounded-[10px] bg-white font-[Lato,sans-serif]">
        <TitleBar />
        <TabStrip />
        <Ribbon />
        <Canvas />
        <Timeline />
      </div>
    </div>
  );
}
